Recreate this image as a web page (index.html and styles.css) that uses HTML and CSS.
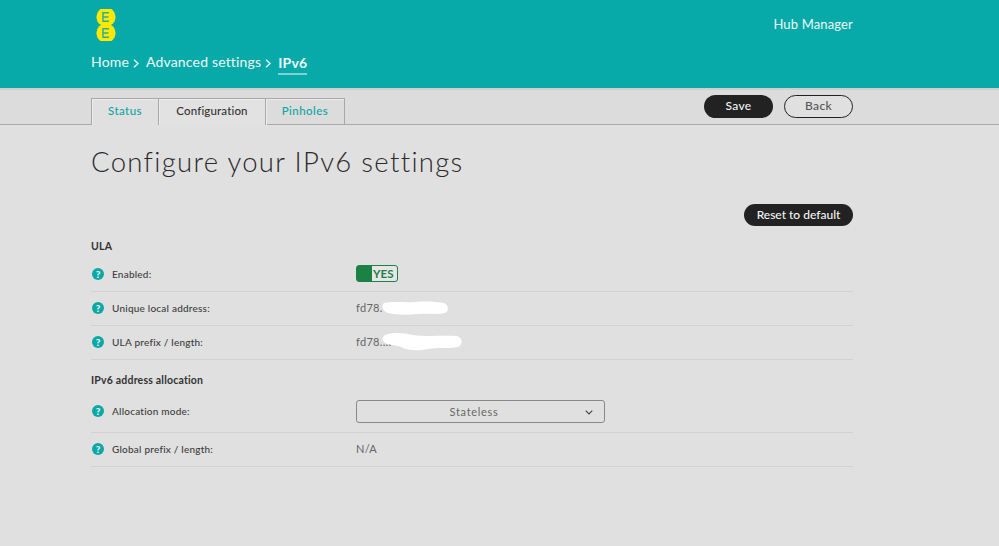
FILE: index.html
```html
<!DOCTYPE html>
<html lang="en">
<head>
<meta charset="utf-8">
<title>Configure your IPv6 settings</title>
<link rel="stylesheet" href="styles.css">
</head>
<body>
<header class="header">
  <div class="wrap header-inner">
    <div class="header-top">
      <svg class="logo" width="20" height="32" viewBox="0 0 20 32" aria-label="EE">
        <circle cx="10" cy="8" r="9.6" fill="#ffe900"/>
        <circle cx="10" cy="24" r="9.6" fill="#ffe900"/>
        <path d="M7 3.800h6M7 8h5.400M7 12.200h6M7 3.100v9.800M7 19.800h6M7 24h5.400M7 28.200h6M7 19.100v9.800" fill="none" stroke="#2bb09a" stroke-width="1.500"/>
      </svg>
      <span class="hub">Hub Manager</span>
    </div>
    <nav class="crumbs">
      <span>Home</span>
      <svg class="sep" width="6" height="9" viewBox="0 0 6 9"><path d="M1 .8 5 4.500 1 8.200" fill="none" stroke="#e6f6f5" stroke-width="1.400"/></svg>
      <span>Advanced settings</span>
      <svg class="sep" width="6" height="9" viewBox="0 0 6 9"><path d="M1 .8 5 4.500 1 8.200" fill="none" stroke="#e6f6f5" stroke-width="1.400"/></svg>
      <span class="current">IPv6</span>
    </nav>
  </div>
</header>
<div class="subbar">
  <div class="wrap subbar-inner">
    <div class="tabs">
      <a class="tab tab-status">Status</a>
      <a class="tab tab-config active">Configuration</a>
      <a class="tab tab-pin">Pinholes</a>
    </div>
    <div class="actions">
      <button class="btn btn-dark btn-save">Save</button>
      <button class="btn btn-outline">Back</button>
    </div>
  </div>
</div>
<main class="wrap">
  <h1 class="title">Configure your IPv6 settings</h1>
  <div class="reset-row"><button class="btn btn-dark btn-reset">Reset to default</button></div>
  <h2 class="section section-ula">ULA</h2>
  <div class="row">
    <span class="help">?</span><span class="label">Enabled:</span>
    <span class="value"><span class="toggle"><span class="knob"></span><span class="yes">YES</span></span></span>
  </div>
  <div class="row">
    <span class="help">?</span><span class="label">Unique local address:</span>
    <span class="value">fd78.
      <svg class="blot blot-a" width="68" height="16" viewBox="0 0 68 16"><path d="M3 3C14 1 24 3 34 2c10-1 22 0 29 1 5 2 5 9 1 10-9 2-18 0-27 1-11 1-22 1-30-1C1 11 0 5 3 3z" fill="#fff"/></svg>
    </span>
  </div>
  <div class="row">
    <span class="help">?</span><span class="label">ULA prefix / length:</span>
    <span class="value">fd78....
      <svg class="blot blot-b" width="84" height="20" viewBox="0 0 84 20"><path d="M4 3C12 0 22 1 32 3c14 2 30 0 44 1 6 2 6 9 1 11-10 2-20 0-30 2-10 2-20 2-27-2C12 12 6 13 3 10 1 8 1 5 4 3z" fill="#fff"/></svg>
    </span>
  </div>
  <h2 class="section section-alloc">IPv6 address allocation</h2>
  <div class="row row-select">
    <span class="help">?</span><span class="label">Allocation mode:</span>
    <span class="value">
      <span class="select">Stateless
        <svg class="chev" width="8" height="5" viewBox="0 0 8 5"><path d="M.7.7 4 4 7.300.7" fill="none" stroke="#444" stroke-width="1.100"/></svg>
      </span>
    </span>
  </div>
  <div class="row">
    <span class="help">?</span><span class="label">Global prefix / length:</span>
    <span class="value">N/A</span>
  </div>
</main>
</body>
</html>
```
FILE: styles.css
```css
* { box-sizing: border-box; }
html, body { margin: 0; padding: 0; }
body {
  width: 999px;
  height: 546px;
  overflow: hidden;
  background: #e0e0e0;
  font-family: Lato, "Open Sans", sans-serif;
  color: #3c3c3c;
}
.wrap { width: 762px; margin-left: 91px; }

.header { height: 88px; background: #07aaa8; color: #eef8f8; }
.header-inner { height: 100%; display: flex; flex-direction: column; }
.header-top { display: flex; justify-content: space-between; align-items: flex-start; padding-top: 9px; height: 44px; }
.logo { margin-left: 5px; }
.hub { font-size: 13px; letter-spacing: .15px; margin-top: 7px; }
.crumbs { display: flex; align-items: center; font-size: 14px; letter-spacing: .17px; margin-top: 3px; height: 29px; }
.sep { margin: 3px 7px 0 4px; }
.current { font-weight: 700; border-bottom: 2px solid #7fd2d0; padding: 4px 0 2px; margin-top: 2px; }

.subbar { height: 37px; background: #dcdcdc; border-top: 2px solid #cfcfcf; border-bottom: 1px solid #aaa; }
.subbar-inner { height: 100%; display: flex; justify-content: space-between; }
.tabs { display: flex; margin-top: 8px; height: 27px; border: 1px solid #a8a8a8; border-bottom: 0; }
.tab { display: flex; align-items: center; justify-content: center; font-size: 11.500px; letter-spacing: .45px; color: #0fa5a3; font-weight: 500; padding-bottom: 3px; box-shadow: inset 1px 1px 0 #ececec; }
.tab-status { width: 67px; border-right: 1px solid #a8a8a8; background: #e0e0e0; }
.tab-config { width: 107px; border-right: 1px solid #a8a8a8; letter-spacing: .15px; }
.tab-pin { width: 78px; }
.active { color: #333; background: #e2e2e2; }
.actions { display: flex; gap: 11px; margin-top: 5px; }

.btn { font-family: inherit; border-radius: 12px; padding: 0 0 2px; height: 23px; font-size: 12px; letter-spacing: .3px; font-weight: 500; }
.btn-dark { background: #222; color: #f5f5f5; border: 0; }
.btn-outline { background: #e0e0e0; color: #555; border: 1.500px solid #222; width: 69px; }
.btn-save { width: 69px; }
.btn-reset { width: 109px; height: 22px; letter-spacing: 0; }

.title { margin: 20px 0 0; font-size: 27.500px; line-height: 34px; font-weight: 300; letter-spacing: 1.310px; color: #2a2a2a; }
.reset-row { display: flex; justify-content: flex-end; margin-top: 25px; }

.section { margin: 0 0 5px; font-size: 10.500px; font-weight: 700; color: #333; letter-spacing: .2px; line-height: 14px; }
.section-ula { margin-top: 13px; }
.section-alloc { margin-top: 13px; }

.row { display: flex; align-items: center; height: 34px; padding-bottom: 2px; border-bottom: 1px solid #d2d2d2; }
.row-select { height: 41px; }
.help { width: 12px; height: 12px; margin-left: 1px; border-radius: 50%; background: #0ba8a6; color: #e8f8f8; font-size: 10px; font-weight: 900; line-height: 12px; text-align: center; }
.label { width: 244px; margin-left: 8px; font-size: 10px; font-weight: 500; letter-spacing: .22px; color: #3c3c3c; }
.value { position: relative; display: flex; align-items: center; font-size: 11px; letter-spacing: .3px; color: #666; }

.toggle { display: flex; width: 42px; height: 17px; border: 1px solid #1c8145; border-radius: 3px; background: #e6e6e6; }
.knob { width: 15px; background: #1c8145; }
.yes { font-size: 11.500px; font-weight: 700; color: #1c8145; margin-left: 1px; line-height: 15px; letter-spacing: .1px; }

.blot { position: absolute; }
.blot-a { left: 25px; top: -1px; }
.blot-b { left: 25px; top: -3px; }

.select { position: relative; display: block; width: 249px; height: 23px; border: 1px solid #888; border-radius: 3px; line-height: 21px; text-align: center; padding-right: 13px; letter-spacing: .7px; }
.chev { position: absolute; right: 11px; top: 9px; }
```
